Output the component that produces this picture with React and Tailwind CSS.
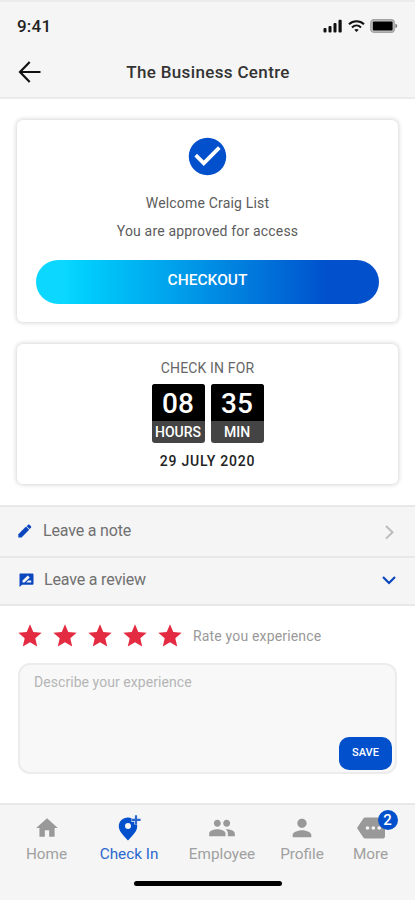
import React, { useState } from 'react';
import clsx from 'clsx';
import { MdCheckCircle, MdHome, MdMore, MdPeople, MdPerson, MdStar } from 'react-icons/md';

const StatusBar = () => (
  <div className="flex h-[48px] items-center justify-between px-[17px]">
    <span className="text-[17px] font-medium leading-5 tracking-[0.2px] text-[#222]">9:41</span>
    <div className="flex items-center">
      <svg width="20" height="14" viewBox="0 0 20 14" fill="#111">
        <rect x="0.5" y="9" width="3" height="4.5" rx="1" />
        <rect x="5.5" y="7" width="3" height="6.5" rx="1" />
        <rect x="10.5" y="4" width="3" height="9.5" rx="1" />
        <rect x="15.5" y="0.8" width="3.2" height="12.7" rx="1" />
      </svg>
      <svg className="ml-[5px]" width="17" height="14" viewBox="0 0 17 14" fill="none" stroke="#111" strokeWidth="2">
        <path d="M1 5.2C5.2 1.2 11.8 1.2 16 5.2" />
        <path d="M4 8.4c2.6-2.4 6.4-2.4 9 0" />
        <path d="M8.5 13L6.3 10.8c1.3-1.1 3.1-1.1 4.4 0z" fill="#111" stroke="none" />
      </svg>
      <svg className="ml-[5px]" width="28" height="14" viewBox="0 0 28 14">
        <rect x="0.8" y="0.8" width="23.4" height="12.4" rx="3" fill="#c8c8c8" stroke="#a3a3a3" strokeWidth="1.4" />
        <rect x="2.8" y="2.6" width="19.8" height="8.8" rx="1" fill="#000" />
        <path d="M25.4 4.8c2.4.5 2.4 3.9 0 4.4z" fill="#777" />
      </svg>
    </div>
  </div>
);

const TimeBox = ({ value, label }) => (
  <div className="h-[59px] w-[53px] overflow-hidden rounded-[3px] bg-[#444] text-center text-white">
    <div className="h-[37px] bg-black text-[28px] font-medium leading-[39px]">{value}</div>
    <div className="text-[14px] font-medium leading-[22px]">{label}</div>
  </div>
);

const PencilIcon = () => (
  <svg width="14" height="14" viewBox="0 0 14 14" fill="#0b46bf">
    <path d="M0.300 13.500V10.300L8 2.600l3.200 3.200-7.700 7.700z" />
    <path d="M8.700 2.200L10.100.8c.4-.4 1-.4 1.400 0l1.500 1.500c.4.4.4 1 0 1.400l-1.400 1.400z" />
  </svg>
);

const ReviewIcon = () => (
  <svg width="15" height="14" viewBox="0 0 15 14">
    <path d="M1.300 0.500h12.400c.4 0 .8.400.8.800v9.600c0 .4-.4.800-.8.800H3L.5 13.900V1.300c0-.4.400-.8.800-.8z" fill="#0b46bf" />
    <path d="M3.500 9.600V7.600L8.800 2.400l2 2-5.300 5.200zM7.200 9.600l2-2h3v2z" fill="#f5f5f5" />
  </svg>
);

const PinPlusIcon = () => (
  <svg width="26" height="28" viewBox="0 0 26 28">
    <path
      d="M12 3.500C6.800 3.500 2.800 7.400 2.800 12.300c0 4.900 4 8.500 9.200 14.200 5.200-5.700 9.200-9.300 9.200-14.200C21.200 7.400 17.200 3.500 12 3.500z"
      fill="#0350cc"
    />
    <circle cx="12" cy="12" r="3" fill="#f5f5f5" />
    <path d="M20 1v9.500M15.200 6h9.600" stroke="#f5f5f5" strokeWidth="3.400" />
    <path d="M20 1.200v9.200M15.400 5.800h9.200" stroke="#2a68cf" strokeWidth="2.200" />
  </svg>
);

const tabs = [
  { name: 'Home', icon: <MdHome size={26} />, width: 'w-[73px]' },
  { name: 'Check In', icon: <PinPlusIcon />, width: 'w-[92px]' },
  { name: 'Employee', icon: <MdPeople size={28} />, width: 'w-[94px]' },
  { name: 'Profile', icon: <MdPerson size={28} />, width: 'w-[66px]' },
  { name: 'More', icon: <MdMore size={28} />, width: 'w-[71px]', badge: 2 },
];

const App = () => {
  const [active, setActive] = useState('Check In');
  const [rating, setRating] = useState(5);

  return (
    <div className="flex h-[900px] w-[415px] flex-col overflow-hidden bg-white font-[Roboto,sans-serif]">
      <header className="h-[99px] shrink-0 border-y-2 border-[#ebebeb] bg-[#f5f5f5]">
        <StatusBar />
        <div className="grid h-[44px] grid-cols-[60px_1fr_60px] items-center">
          <button className="pl-[18px]" aria-label="Back">
            <svg width="24" height="24" viewBox="0 0 24 24" fill="none" stroke="#111" strokeWidth="2.200">
              <path d="M11.700 2L2 12l9.700 10M2 12h20.500" />
            </svg>
          </button>
          <h1 className="pl-px pt-px text-center text-[17px] font-medium tracking-[0.35px] text-[#333]">The Business Centre</h1>
        </div>
      </header>

      {/* Access card */}
      <section className="mx-[17px] mt-[21px] flex h-[202px] shrink-0 flex-col items-center rounded-[6px] px-[19px] pt-[14px] shadow-[0_0_4px_1px_rgba(0,0,0,0.16)]">
        <MdCheckCircle size={45} className="text-[#0350cc]" />
        <p className="mt-[12px] text-[14px] leading-[24px] tracking-[0.18px] text-[#5c5c5c]">Welcome Craig List</p>
        <p className="mt-[4px] text-[14px] leading-[24px] tracking-[0.17px] text-[#5c5c5c]">You are approved for access</p>
        <button className="mt-[17px] h-[44px] w-full shrink-0 rounded-full bg-linear-to-r from-[#0cd8ff] from-8% to-[#0350cc] to-85% pb-[2px] text-[15.500px] font-medium text-white">
          CHECKOUT
        </button>
      </section>

      {/* Timer card */}
      <section className="mx-[17px] mt-[22px] flex h-[140px] shrink-0 flex-col items-center rounded-[6px] pt-[14px] shadow-[0_0_4px_1px_rgba(0,0,0,0.16)]">
        <p className="text-[14px] leading-[20px] tracking-[0.15px] text-[#666]">CHECK IN FOR</p>
        <div className="mt-[6px] flex gap-[6px]">
          <TimeBox value="08" label="HOURS" />
          <TimeBox value="35" label="MIN" />
        </div>
        <p className="mt-[8px] text-[14px] font-medium leading-[20px] tracking-[0.8px] text-[#222]">29 JULY 2020</p>
      </section>

      <div className="mt-[21px] shrink-0 bg-[#f5f5f5] text-[16px] tracking-[-0.170px] text-[#707070]">
        <div className="flex h-[51px] items-center border-t-2 border-[#e8e8e8] pb-[2px] pl-[18px] pr-[19px]">
          <PencilIcon />
          <span className="ml-[11px]">Leave a note</span>
          <svg className="ml-auto mt-[2px]" width="14" height="16" viewBox="0 0 14 16" fill="none" stroke="#bdbdbd" strokeWidth="2">
            <path d="M4 2l6.500 6.300L4 14.600" />
          </svg>
        </div>
        <div className="flex h-[50px] items-center border-y-2 border-[#e8e8e8] pb-[2px] pl-[19px] pr-[18px]">
          <ReviewIcon />
          <span className="ml-[10px]">Leave a review</span>
          <svg className="ml-auto" width="16" height="12" viewBox="0 0 16 12" fill="none" stroke="#0b46bf" strokeWidth="2.200">
            <path d="M2 3l6 6 6-6" />
          </svg>
        </div>
      </div>

      <div className="mt-[13px] flex h-[34px] shrink-0 items-center pl-[16px]">
        {[1, 2, 3, 4, 5].map((n) => (
          <button key={n} onClick={() => setRating(n)} className="w-[35px]" aria-label={`${n} stars`}>
            <MdStar size={28} className={n <= rating ? 'text-[#e32b41]' : 'text-[#ccc]'} />
          </button>
        ))}
        <span className="ml-[2px] text-[14px] tracking-[0.170px] text-[#999]">Rate you experience</span>
      </div>

      <div className="relative mx-[18px] mt-[10px] h-[111px] shrink-0 rounded-[12px] border-2 border-[#ececec] bg-[#f8f8f8]">
        <textarea
          className="block h-full w-full resize-none px-[14px] pt-[6px] text-[14px] leading-[22px] tracking-[0.060px] outline-none placeholder:text-[#b5b5b5]"
          placeholder="Describe your experience"
        />
        <button className="absolute bottom-[2px] right-[3px] h-[33px] w-[53px] rounded-[10px] bg-[#0350cc] text-[11px] font-medium text-white">
          SAVE
        </button>
      </div>

      <nav className="mt-auto flex h-[97px] shrink-0 flex-col items-center border-t-2 border-[#e8e8e8] bg-[#f5f5f5]">
        <div className="flex w-full pl-[10px]">
          {tabs.map((tab) => (
            <button
              key={tab.name}
              onClick={() => setActive(tab.name)}
              className={clsx('flex flex-col items-center', tab.width, active === tab.name ? 'text-[#2a68cf]' : 'text-[#a0a0a0]')}
            >
              <span className="relative mt-[9px] flex h-[28px] items-center text-[#999]">
                {tab.icon}
                {tab.badge && (
                  <span className="absolute -right-[13px] -top-[4px] h-[20px] w-[20px] rounded-full bg-[#0350cc] text-[15px] font-medium leading-[20px] text-white">
                    {tab.badge}
                  </span>
                )}
              </span>
              <span className="mt-[1px] whitespace-nowrap text-[15.300px] leading-[22px]">{tab.name}</span>
            </button>
          ))}
        </div>
        <div className="mt-[16px] h-[5px] w-[148px] rounded-full bg-black" />
      </nav>
    </div>
  );
};

export default App;
